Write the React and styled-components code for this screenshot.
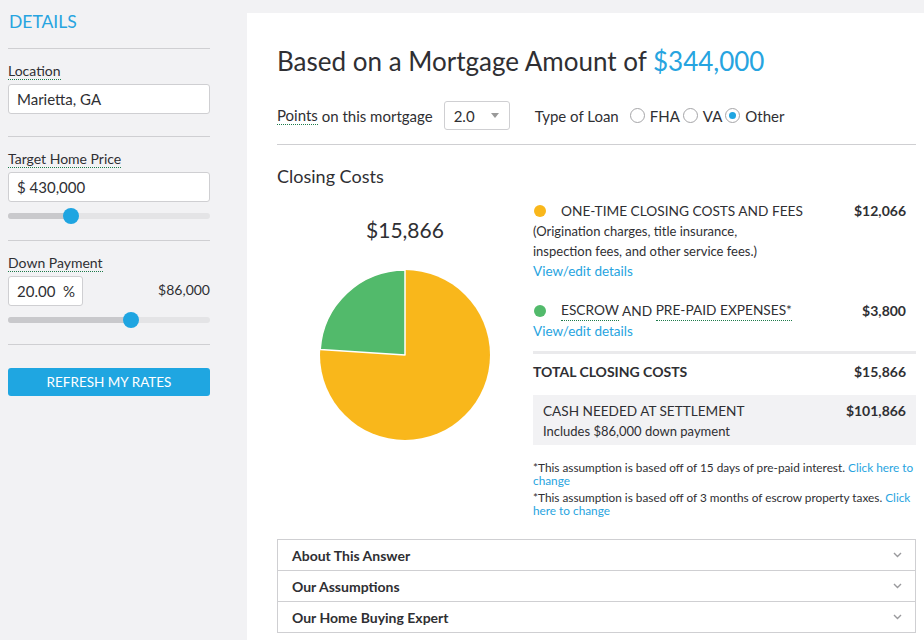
import styled, { createGlobalStyle } from "styled-components";

const GlobalStyle = createGlobalStyle`
  body {
    margin: 0;
    background: #f2f2f4;
    font-family: Lato, "Liberation Sans", sans-serif;
    color: #2f2f33;
  }
`

const Page = styled.div`
  display: flex;
  min-height: 640px;
`

const Sidebar = styled.aside`
  width: 202px;
  flex: none;
  padding: 10px 37px 0 8px;
`

const SideTitle = styled.div`
  color: #27a4e0;
  font-size: 17.5px;
  line-height: 24px;
  padding-left: 1px;
  padding-bottom: 14px;
  border-bottom: 1px solid #cfcfd2;
`

const Section = styled.div`
  padding: 13px 0 ${p => p.$bottom || 22}px;
  border-bottom: 1px solid #cfcfd2;
`

const Label = styled.div`
  width: fit-content;
  font-size: 14px;
  line-height: 17px;
  border-bottom: 1px dotted #1d7a4a;
`

const Input = styled.div`
  box-sizing: border-box;
  margin-top: 4px;
  height: 30px;
  width: ${p => p.$width || "100%"};
  background: #fff;
  border: 1px solid #cfcfd2;
  border-radius: 3px;
  padding: 0 8px;
  display: flex;
  align-items: center;
  white-space: pre;
  font-size: 15px;
`

const InputRow = styled.div`
  display: flex;
  justify-content: space-between;
  align-items: center;
  font-size: 14px;
`

const Track = styled.div`
  position: relative;
  margin-top: 11px;
  height: 6px;
  border-radius: 3px;
  background: #e4e4e6;
`

const TrackFill = styled.div`
  height: 100%;
  border-radius: 3px;
  background: #c9c9cc;
`

const Thumb = styled.div`
  position: absolute;
  top: -5px;
  width: 16px;
  height: 16px;
  margin-left: -8px;
  border-radius: 50%;
  background: #1fa5e1;
`

const RefreshButton = styled.button`
  display: block;
  margin-top: 23px;
  width: 100%;
  height: 28px;
  border: none;
  border-radius: 3px;
  background: #1fa6e1;
  color: #fff;
  font-family: inherit;
  font-size: 13.5px;
`

const Main = styled.main`
  flex: 1;
  margin-top: 13px;
  background: #fff;
  padding: 33px 8px 0 30px;
`

const Title = styled.h1`
  margin: 0;
  font-weight: normal;
  font-size: 26px;
  line-height: 30px;
  span { color: #27a4e0; }
`

const OptionsRow = styled.div`
  display: flex;
  align-items: center;
  margin-top: 25px;
  padding-bottom: 14px;
  border-bottom: 1px solid #cfcfd2;
  font-size: 15px;
`

const Select = styled.div`
  box-sizing: border-box;
  width: 66px;
  height: 29px;
  margin: 0 25px 0 11px;
  border: 1px solid #cfcfd2;
  border-radius: 3px;
  display: flex;
  align-items: center;
  justify-content: space-between;
  padding: 0 10px 0 9px;
  font-size: 15px;
  &::after {
    content: "";
    border: 4px solid transparent;
    border-top: 5px solid #999;
    border-bottom: none;
  }
`

const Radio = styled.span`
  box-sizing: border-box;
  width: 15px;
  height: 15px;
  margin: 0 5px 0 ${p => p.$first ? 11 : 3}px;
  border-radius: 50%;
  border: 1px solid #a5a5a8;
  display: inline-flex;
  align-items: center;
  justify-content: center;
  &::after {
    content: "";
    width: 7px;
    height: 7px;
    border-radius: 50%;
    background: ${p => p.$checked ? "#1fa5e1" : "transparent"};
  }
`

const SectionTitle = styled.h2`
  margin: 21px 0 0;
  font-weight: normal;
  font-size: 18px;
  line-height: 20px;
`

const Columns = styled.div`
  display: grid;
  grid-template-columns: 256px 1fr;
  margin-top: 15px;
`

const ChartCol = styled.div`
  display: flex;
  flex-direction: column;
  align-items: center;
`

const ChartTotal = styled.div`
  margin-top: 16px;
  font-size: 21px;
  line-height: 26px;
`

const Pie = styled.svg`
  margin-top: 26px;
`

const ItemHead = styled.div`
  display: flex;
  align-items: center;
  font-size: 13.7px;
  line-height: 20px;
  margin-top: ${p => p.$top || 0}px;
  padding-right: 10px;
`

const Dot = styled.span`
  width: 12px;
  height: 12px;
  border-radius: 50%;
  background: ${p => p.$color};
  margin: 0 15px 0 1px;
`

const Amount = styled.span`
  margin-left: auto;
  font-size: 14px;
  font-weight: bold;
`

const Desc = styled.div`
  font-size: 13px;
  line-height: 20px;
`

const Link = styled.a`
  color: #27a4e0;
  font-size: 13.5px;
  line-height: 20px;
  display: block;
`

const Tip = styled.span`
  border-bottom: 1px dotted #1d7a4a;
`

const TotalRow = styled.div`
  display: flex;
  margin-top: 10px;
  border-top: 3px solid #eaeaec;
  padding: 8px 10px 0 0;
  font-size: 14px;
  line-height: 20px;
  font-weight: bold;
`

const CashBox = styled.div`
  margin-top: 13px;
  background: #f2f2f4;
  padding: 6px 10px 4px;
  font-size: 13.6px;
  line-height: 20px;
`

const CashHead = styled.div`
  display: flex;
`

const Note = styled.p`
  margin: ${p => p.$top || 4}px 0 0;
  font-size: 11.8px;
  line-height: 13px;
  a { color: #27a4e0; }
`

const Accordion = styled.div`
  margin-top: 22px;
  border: 1px solid #cfcfd2;
`

const AccordionRow = styled.div`
  display: flex;
  align-items: center;
  justify-content: space-between;
  height: 30px;
  padding: 0 13px 0 14px;
  font-size: 14px;
  font-weight: bold;
  & + & { border-top: 1px solid #cfcfd2; }
`

function Chevron() {
  return (
    <svg width="9" height="6" viewBox="0 0 9 6">
      <path d="M1 1l3.5 3.5L8 1" fill="none" stroke="#9a9a9d" strokeWidth="1.4" />
    </svg>
  )
}

function Slider({ value }) {
  return (
    <Track>
      <TrackFill style={{ width: value + "%" }} />
      <Thumb style={{ left: value + "%" }} />
    </Track>
  )
}

function PieChart({ parts }) {
  const total = parts.reduce((s, p) => s + p.value, 0);
  const r = 85, c = 86;
  const green = parts[1].value / total;
  const a = -Math.PI / 2 - green * 2 * Math.PI;
  const x = c + r * Math.cos(a), y = c + r * Math.sin(a);
  return (
    <Pie width="172" height="172" viewBox="0 0 172 172">
      <circle cx={c} cy={c} r={r} fill={parts[0].color} />
      <path d={`M${c} ${c} L${c} ${c - r} A${r} ${r} 0 0 0 ${x} ${y} Z`}
        fill={parts[1].color} stroke="#fff" strokeWidth="1.5" strokeLinejoin="round" />
    </Pie>
  )
}

const parts = [
  { value: 12066, color: "#f9b71b" },
  { value: 3800, color: "#52ba6b" },
];

export default function App() {
  return (
    <Page>
      <GlobalStyle />
      <Sidebar>
        <SideTitle>DETAILS</SideTitle>
        <Section>
          <Label>Location</Label>
          <Input>Marietta, GA</Input>
        </Section>
        <Section $bottom={21}>
          <Label>Target Home Price</Label>
          <Input>$ 430,000</Input>
          <Slider value={31} />
        </Section>
        <Section $bottom={21}>
          <Label>Down Payment</Label>
          <InputRow>
            <Input $width="75px">20.00  %</Input>
            <span>$86,000</span>
          </InputRow>
          <Slider value={61} />
        </Section>
        <RefreshButton>REFRESH MY RATES</RefreshButton>
      </Sidebar>

      <Main>
        <Title>Based on a Mortgage Amount of <span>$344,000</span></Title>
        <OptionsRow>
          <Tip>Points</Tip>&nbsp;on this mortgage
          <Select>2.0</Select>
          Type of Loan
          <Radio $first />FHA
          <Radio />VA
          <Radio $checked />Other
        </OptionsRow>

        <SectionTitle>Closing Costs</SectionTitle>
        <Columns>
          <ChartCol>
            <ChartTotal>$15,866</ChartTotal>
            <PieChart parts={parts} />
          </ChartCol>
          <div>
            <ItemHead>
              <Dot $color="#f9b71b" />ONE-TIME CLOSING COSTS AND FEES
              <Amount>$12,066</Amount>
            </ItemHead>
            <Desc>(Origination charges, title insurance,<br />inspection fees, and other service fees.)</Desc>
            <Link>View/edit details</Link>
            <ItemHead $top={19}>
              <Dot $color="#52ba6b" /><Tip>ESCROW</Tip>&nbsp;AND&nbsp;<Tip>PRE-PAID EXPENSES*</Tip>
              <Amount>$3,800</Amount>
            </ItemHead>
            <Link>View/edit details</Link>
            <TotalRow>
              TOTAL CLOSING COSTS
              <Amount>$15,866</Amount>
            </TotalRow>
            <CashBox>
              <CashHead>CASH NEEDED AT SETTLEMENT<Amount>$101,866</Amount></CashHead>
              <Desc>Includes $86,000 down payment</Desc>
            </CashBox>
            <Note $top={16}>*This assumption is based off of 15 days of pre-paid interest. <a>Click here to change</a></Note>
            <Note>*This assumption is based off of 3 months of escrow property taxes. <a>Click here to change</a></Note>
          </div>
        </Columns>

        <Accordion>
          <AccordionRow>About This Answer<Chevron /></AccordionRow>
          <AccordionRow>Our Assumptions<Chevron /></AccordionRow>
          <AccordionRow>Our Home Buying Expert<Chevron /></AccordionRow>
        </Accordion>
      </Main>
    </Page>
  )
}
